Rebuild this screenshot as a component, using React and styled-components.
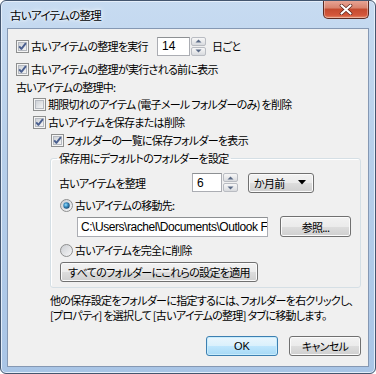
import React from 'react'
import styled, { createGlobalStyle } from 'styled-components'

const GlobalStyle = createGlobalStyle`
  html, body {
    margin: 0;
    padding: 0;
    background: #ffffff;
  }
  body {
    font-family: "Noto Sans CJK JP", "Noto Sans", sans-serif;
    font-size: 11px;
    letter-spacing: -0.7px;
    font-feature-settings: "palt";
    color: #000;
  }
`

const Window = styled.div`
  width: 376px;
  height: 374px;
  box-sizing: border-box;
  border: 1px solid #44566f;
  border-radius: 6px;
  background: linear-gradient(180deg, #c7dbf1 0%, #b7cfea 40%, #a9c5e6 100%);
  box-shadow: inset 0 0 0 1px #e4eefa;
  display: flex;
  flex-direction: column;
  padding: 0 6px 6px 6px;
  overflow: hidden;
`

const TitleBar = styled.div`
  height: 27px;
  display: flex;
  align-items: flex-start;
  justify-content: space-between;
`

const Title = styled.div`
  margin-top: 6px;
  margin-left: 3px;
  font-size: 11.5px;
  line-height: 16px;
  text-shadow: 0 0 6px #ffffff, 0 0 3px #ffffff;
`

const CloseButton = styled.div`
  width: 46px;
  height: 19px;
  margin-top: -1px;
  box-sizing: border-box;
  border: 1px solid #5c2a22;
  border-top: none;
  border-radius: 0 0 5px 5px;
  background: linear-gradient(180deg, #e9a899 0%, #d8826d 45%, #c44a2f 50%, #d4573b 85%, #e6906f 100%);
  box-shadow: inset 0 0 0 1px rgba(255, 255, 255, 0.35);
  display: flex;
  align-items: center;
  justify-content: center;
`

const Client = styled.div`
  flex: 1;
  box-sizing: border-box;
  border: 1px solid #8598b3;
  background: #f0f0f0;
  padding: 7px 7px 0 8px;
  display: flex;
  flex-direction: column;
`

const Row = styled.div`
  display: flex;
  align-items: center;
  height: ${p => p.$h || 18}px;
  margin-top: ${p => p.$mt || 0}px;
  padding-left: ${p => p.$indent || 0}px;
  white-space: nowrap;
`

const Label = styled.span`
  display: inline-block;
  width: ${p => (p.$w ? `${p.$w}px` : 'auto')};
  margin-left: ${p => p.$ml || 0}px;
  line-height: 16px;
`

const BoxWrap = styled.span`
  display: inline-flex;
  width: 13px;
  height: 13px;
  margin-right: 2px;
  flex-shrink: 0;
`

const Checkbox = ({ checked }) => (
  <BoxWrap>
    <svg width="13" height="13" viewBox="0 0 13 13">
      <defs>
        <linearGradient id="cbg" x1="0" y1="0" x2="1" y2="1">
          <stop offset="0" stopColor="#cbcfd5" />
          <stop offset="1" stopColor="#f6f6f6" />
        </linearGradient>
      </defs>
      <rect x="0.5" y="0.5" width="12" height="12" fill="#f4f4f4" stroke="#8e8f8f" />
      <rect x="2.5" y="2.5" width="8" height="8" fill="url(#cbg)" stroke="#b5b9c0" strokeWidth="1" />
      {checked && (
        <path d="M3.2 6.4 L5.4 8.9 L9.9 3.2" fill="none" stroke="#4a5f8f" strokeWidth="1.9" strokeLinejoin="round" />
      )}
    </svg>
  </BoxWrap>
)

const RadioWrap = styled.span`
  display: inline-flex;
  width: 13px;
  height: 13px;
  margin-left: 1px;
  margin-right: 2px;
  flex-shrink: 0;
`

const Radio = ({ checked }) => (
  <RadioWrap>
    <svg width="13" height="13" viewBox="0 0 13 13">
      <defs>
        <linearGradient id="rbg" x1="0" y1="0" x2="1" y2="1">
          <stop offset="0" stopColor="#c9ccd1" />
          <stop offset="1" stopColor="#f8f8f8" />
        </linearGradient>
        <radialGradient id="rdot" cx="0.4" cy="0.4" r="0.6">
          <stop offset="0" stopColor="#9fe3ff" />
          <stop offset="0.5" stopColor="#3a8ec2" />
          <stop offset="1" stopColor="#1d4f79" />
        </radialGradient>
      </defs>
      <circle cx="6.5" cy="6.5" r="6" fill="url(#rbg)" stroke="#8e8f8f" />
      {checked && <circle cx="6.5" cy="6.5" r="3.2" fill="url(#rdot)" />}
    </svg>
  </RadioWrap>
)

const SpinWrap = styled.div`
  display: flex;
  height: ${p => p.$h}px;
  flex-shrink: 0;
`

const SpinInput = styled.div`
  width: ${p => p.$w}px;
  box-sizing: border-box;
  border: 1px solid #abadb3;
  border-top-color: #8d9093;
  background: #fff;
  display: flex;
  align-items: center;
  padding-left: 4px;
  font-family: "Liberation Sans", Arial, sans-serif;
  font-size: 12px;
  letter-spacing: 0;
`

const SpinButtons = styled.div`
  width: 15px;
  margin-left: 1px;
  display: flex;
  flex-direction: column;
  gap: 1px;
`

const SpinBtn = styled.div`
  flex: 1;
  box-sizing: border-box;
  border: 1px solid #b9bcc2;
  border-radius: 2px;
  background: linear-gradient(180deg, #f7f7f7 0%, #e7e8ea 55%, #d8dade 100%);
  display: flex;
  align-items: center;
  justify-content: center;
`

const Tri = ({ up }) => (
  <svg width="7" height="4" viewBox="0 0 7 4">
    <path d={up ? 'M0.5 3.5 L3.5 0.5 L6.5 3.5 Z' : 'M0.5 0.5 L3.5 3.5 L6.5 0.5 Z'} fill="#5a6a85" />
  </svg>
)

const Spinner = ({ value, w, h }) => (
  <SpinWrap $h={h}>
    <SpinInput $w={w}>{value}</SpinInput>
    <SpinButtons>
      <SpinBtn>
        <Tri up />
      </SpinBtn>
      <SpinBtn>
        <Tri />
      </SpinBtn>
    </SpinButtons>
  </SpinWrap>
)

const Combo = styled.div`
  width: 66px;
  height: 20px;
  margin-left: 10px;
  box-sizing: border-box;
  border: 1px solid #707070;
  border-radius: 3px;
  background: linear-gradient(180deg, #f2f2f2 0%, #ebebeb 50%, #dddddd 51%, #cfcfcf 100%);
  box-shadow: inset 0 0 0 1px #fbfbfb;
  display: flex;
  align-items: center;
  justify-content: space-between;
  padding: 0 7px 0 5px;
  flex-shrink: 0;
`

const Group = styled.fieldset`
  margin: 1px 0 0 34px;
  padding: 0 0 5px 8px;
  border: 1px solid #d5dfe5;
  border-radius: 3px;
  box-shadow: inset 1px 1px 0 #ffffff;
  min-width: 0;
`

const Legend = styled.legend`
  padding: 0 2px;
  margin-left: -2px;
  line-height: 16px;
`

const PathBox = styled.div`
  width: 191px;
  height: 20px;
  box-sizing: border-box;
  margin-left: 18px;
  border: 1px solid #abadb3;
  border-top-color: #8d9093;
  background: #fff;
  padding: 2px 0 0 3px;
  overflow: hidden;
  font-family: "Liberation Sans", Arial, sans-serif;
  font-size: 12px;
  line-height: 15px;
  letter-spacing: -0.45px;
  flex-shrink: 0;
`

const Button = styled.div`
  width: ${p => p.$w}px;
  height: ${p => p.$h || 20}px;
  margin-left: ${p => p.$ml || 0}px;
  box-sizing: border-box;
  border: 1px solid ${p => (p.$default ? '#3c7fb1' : '#707070')};
  border-radius: 3px;
  background: ${p =>
    p.$default
      ? 'linear-gradient(180deg, #eaf6fd 0%, #d9f0fc 50%, #bee6fd 51%, #a7d9f5 100%)'
      : 'linear-gradient(180deg, #f2f2f2 0%, #ebebeb 50%, #dddddd 51%, #cfcfcf 100%)'};
  box-shadow: inset 0 0 0 1px ${p => (p.$default ? '#c8ecfc' : '#fbfbfb')};
  display: flex;
  align-items: center;
  justify-content: center;
  line-height: 16px;
  flex-shrink: 0;
`

const Note = styled.div`
  margin: 5px 0 0 34px;
  line-height: 15px;
  white-space: nowrap;
`

const Footer = styled.div`
  display: flex;
  justify-content: flex-end;
  margin-top: 13px;
`

const OkText = styled.span`
  font-family: "Liberation Sans", Arial, sans-serif;
  font-size: 11px;
  letter-spacing: 0;
`

export default function App() {
  return (
    <>
      <GlobalStyle />
      <Window>
        <TitleBar>
          <Title>古いアイテムの整理</Title>
          <CloseButton>
            <svg width="14" height="11" viewBox="0 0 14 11">
              <path d="M2.5 1.5 L11.5 9.5 M11.5 1.5 L2.5 9.5" stroke="#5a2018" strokeWidth="3.6" strokeLinecap="round" />
              <path d="M2.5 1.5 L11.5 9.5 M11.5 1.5 L2.5 9.5" stroke="#ffffff" strokeWidth="2.2" strokeLinecap="round" />
            </svg>
          </CloseButton>
        </TitleBar>
        <Client>
          <Row $h={20}>
            <Checkbox checked />
            <Label $w={126}>古いアイテムの整理を実行</Label>
            <Spinner value="14" w={33} h={19} />
            <Label $ml={6}>日ごと</Label>
          </Row>
          <Row $mt={4}>
            <Checkbox checked />
            <Label>古いアイテムの整理が実行される前に表示</Label>
          </Row>
          <Row $h={17}>
            <Label>古いアイテムの整理中:</Label>
          </Row>
          <Row $indent={17}>
            <Checkbox />
            <Label>期限切れのアイテム (電子メール フォルダーのみ) を削除</Label>
          </Row>
          <Row $indent={17}>
            <Checkbox checked />
            <Label>古いアイテムを保存または削除</Label>
          </Row>
          <Row $indent={35}>
            <Checkbox checked />
            <Label>フォルダーの一覧に保存フォルダーを表示</Label>
          </Row>
          <Group>
            <Legend>保存用にデフォルトのフォルダーを設定</Legend>
            <Row $h={21} $mt={6}>
              <Label $w={133}>古いアイテムを整理</Label>
              <Spinner value="6" w={30} h={19} />
              <Combo>
                <span>か月前</span>
                <svg width="8" height="5" viewBox="0 0 8 5">
                  <path d="M0 0 L8 0 L4 4.5 Z" fill="#000" />
                </svg>
              </Combo>
            </Row>
            <Row $mt={3}>
              <Radio checked />
              <Label>古いアイテムの移動先:</Label>
            </Row>
            <Row $h={21} $mt={2}>
              <PathBox>C:\Users\rachel\Documents\Outlook Fil</PathBox>
              <Button $w={71} $h={21} $ml={12}>
                参照...
              </Button>
            </Row>
            <Row $mt={4}>
              <Radio />
              <Label>古いアイテムを完全に削除</Label>
            </Row>
            <Row $h={20} $mt={3}>
              <Button $w={198} $ml={1}>
                すべてのフォルダーにこれらの設定を適用
              </Button>
            </Row>
          </Group>
          <Note>
            他の保存設定をフォルダーに指定するには、フォルダーを右クリックし、
            <br />
            [プロパティ] を選択して [古いアイテムの整理] タブに移動します。
          </Note>
          <Footer>
            <Button $w={72} $default>
              <OkText>OK</OkText>
            </Button>
            <Button $w={72} $ml={11}>
              キャンセル
            </Button>
          </Footer>
        </Client>
      </Window>
    </>
  )
}
